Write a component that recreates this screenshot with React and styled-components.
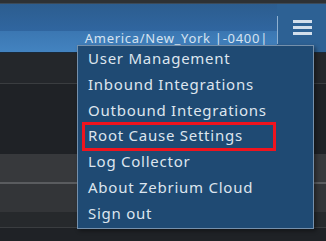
import React from 'react';
import styled, { createGlobalStyle } from 'styled-components';

const GlobalStyle = createGlobalStyle`
  html, body {
    margin: 0;
    padding: 0;
    background: #1f2226;
    font-family: "Noto Sans", "DejaVu Sans", sans-serif;
  }
  #root {
    width: 326px;
    height: 241px;
    overflow: hidden;
  }
`;

const Page = styled.div`
  position: relative;
  width: 326px;
  height: 241px;
  display: flex;
  flex-direction: column;
  background: #1f2226;
`;

const TopStrip = styled.div`
  height: 4px;
  background: #2e3134;
  border-bottom: 1px solid #3c4a58;
  box-sizing: border-box;
`;

const Header = styled.div`
  height: 49px;
  display: flex;
  background: #2d6194;
  border-bottom: 1px solid #1a2a3a;
  box-sizing: border-box;
`;

const HeaderMain = styled.div`
  flex: 1;
  display: flex;
  flex-direction: column;
`;

const HeaderTop = styled.div`
  height: 27px;
  background: linear-gradient(180deg, #2c5d8f 0%, #3066a0 100%);
`;

const HeaderBottom = styled.div`
  flex: 1;
  display: flex;
  align-items: flex-end;
  justify-content: flex-end;
  padding: 0 9px 6px 0;
  background: linear-gradient(180deg, #3b77b2 0%, #4383c0 100%);
`;

const TimeZone = styled.span`
  font-size: 13px;
  line-height: 15px;
  color: #d6e3f0;
  letter-spacing: 0.7px;
`;

const Separator = styled.div`
  width: 1px;
  margin: 12px 0 8px;
  background: #8fb0d0;
`;

const MenuButton = styled.div`
  width: 48px;
  display: flex;
  flex-direction: column;
  gap: 3px;
  padding: 16px 0 0 15px;
  box-sizing: border-box;
`;

const Bar = styled.span`
  display: block;
  width: 19px;
  height: 3px;
  background: #d3dfec;
`;

const Row = styled.div`
  height: ${({ h }) => h}px;
  background: ${({ bg }) => bg};
  border-bottom: ${({ line }) => line || 'none'};
  box-sizing: border-box;
`;

const Menu = styled.ul`
  position: absolute;
  left: 77px;
  top: 45px;
  width: 237px;
  height: 184px;
  margin: 0;
  padding: 0;
  list-style: none;
  background: #1f4a73;
  border: 1px solid #7590ab;
  box-sizing: border-box;
  box-shadow: 2px 2px 4px rgba(0, 0, 0, 0.4);
`;

const Item = styled.li`
  height: 25.8px;
  line-height: 25.8px;
  padding-left: 10px;
  font-size: 15px;
  letter-spacing: 0.75px;
  color: #dde5ee;
  white-space: nowrap;
  position: relative;
`;

const Highlight = styled.span`
  position: absolute;
  left: 4px;
  top: -1px;
  width: 194px;
  height: 29px;
  border: 3px solid #f0141e;
  box-sizing: border-box;
  pointer-events: none;
`;

const items = [
  'User Management',
  'Inbound Integrations',
  'Outbound Integrations',
  'Root Cause Settings',
  'Log Collector',
  'About Zebrium Cloud',
  'Sign out',
];

const App = () => (
  <>
    <GlobalStyle />
    <Page>
      <TopStrip />
      <Header>
        <HeaderMain>
          <HeaderTop />
          <HeaderBottom>
            <TimeZone>America/New_York |-0400|</TimeZone>
          </HeaderBottom>
        </HeaderMain>
        <Separator />
        <MenuButton>
          <Bar />
          <Bar />
          <Bar />
        </MenuButton>
      </Header>
      <Row h={31} bg="#24272b" line="1px solid #3a3d40" />
      <Row h={71} bg="#1f2226" />
      <Row h={30} bg="#37393c" line="2px solid #5a5c5f" />
      <Row h={28} bg="#333538" />
      <Row h={16} bg="#26292c" line="1px solid #3a3d40" />
      <Row h={13} bg="#1f2226" />
      <Menu>
        {items.map((label) => (
          <Item key={label}>
            {label}
            {label === 'Root Cause Settings' && <Highlight />}
          </Item>
        ))}
      </Menu>
    </Page>
  </>
);

export default App;
